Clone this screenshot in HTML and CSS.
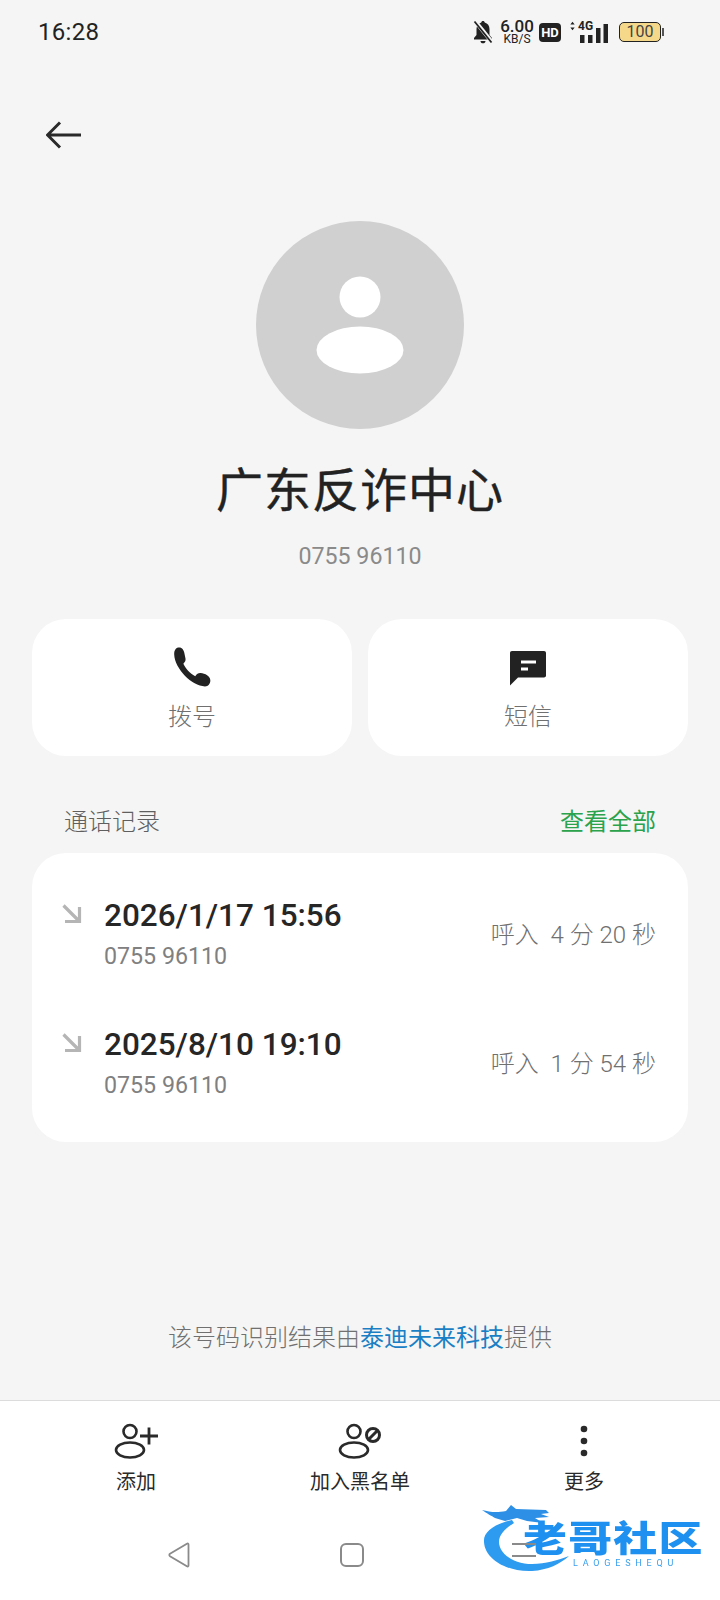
FILE: index.html
```html
<!DOCTYPE html>
<html lang="zh-CN">
  <head>
    <meta charset="UTF-8" />
    <title>广东反诈中心</title>
    <link rel="stylesheet" href="styles.css">
  </head>
  <body>
    <div class="phone">
      <div class="status-bar">
        <span class="time">16:28</span>
        <div class="status-icons">
          <svg class="ic-bell" viewBox="0 0 22 24">
            <path d="M11 1c1 0 1.700.7 1.700 1.600 3 .8 4.800 3.300 4.800 6.400v6l2.500 3v1.500H2V18l2.500-3V9c0-3.100 1.800-5.600 4.800-6.400C9.300 1.700 10 1 11 1zM8.500 21h5c0 1.400-1.100 2.300-2.500 2.300S8.500 22.400 8.500 21z" fill="#222"/>
            <path d="M3 1l17 21" stroke="#f5f5f5" stroke-width="4"/>
            <path d="M2.500 1.500l17 21" stroke="#222" stroke-width="1.800"/>
          </svg>
          <div class="speed"><span class="speed-num">6.00</span><span class="speed-unit">KB/S</span></div>
          <span class="hd">HD</span>
          <div class="signal">
            <svg class="updown" viewBox="0 0 8 14"><path d="M4 1l3 4H1zM4 13L1 9h6z" fill="#222"/></svg>
            <span class="fourg">4G</span>
            <svg class="bars" viewBox="0 0 28 19"><rect x="0" y="11" width="4.500" height="8"/><rect x="8" y="11" width="4.500" height="8"/><rect x="16" y="4" width="4.500" height="15"/><rect x="23.500" y="0" width="4.500" height="19"/></svg>
          </div>
          <div class="battery"><span class="battery-body">100</span><span class="battery-tip"></span></div>
        </div>
      </div>

      <div class="back-row">
        <svg class="back" viewBox="0 0 36 28"><path d="M35 14H2M14 1.500L1.500 14 14 26.500" fill="none" stroke="#2a2a2a" stroke-width="3"/></svg>
      </div>

      <div class="profile">
        <div class="avatar">
          <svg viewBox="0 0 88 98" class="avatar-icon">
            <circle cx="44" cy="21" r="20.500" fill="#fff"/>
            <ellipse cx="44" cy="74" rx="43.500" ry="23.500" fill="#fff"/>
          </svg>
        </div>
        <h1 class="name">广东反诈中心</h1>
        <p class="number">0755 96110</p>
      </div>

      <div class="actions">
        <div class="action">
          <svg class="action-icon" viewBox="2 2 36 38"><path d="M8 2.500C11 2.500 12.500 5 13 8l1 5c.3 2-.7 3-2 4.500 2 4.500 6 9 11 11.500 1.500-2 3-3 5-2.800 4 .3 9 2.800 9 6.800 0 3-2 5.500-5 5.500C20 38.500 4 22 3.500 9 3.400 5 5 2.500 8 2.500z" fill="#222"/></svg>
          <span class="action-label">拨号</span>
        </div>
        <div class="action">
          <svg class="action-icon" viewBox="0 0 40 40"><path d="M4 3.500h32c1.200 0 2 .8 2 2V28c0 1.200-.8 2-2 2H10l-8 8V5.500c0-1.200.8-2 2-2z" fill="#222"/><rect x="13" y="13" width="15" height="3" fill="#fff"/><rect x="13" y="20" width="7" height="3" fill="#fff"/></svg>
          <span class="action-label">短信</span>
        </div>
      </div>

      <div class="section-head">
        <span class="section-title">通话记录</span>
        <span class="section-link">查看全部</span>
      </div>

      <div class="calls">
        <div class="call">
          <svg class="call-arrow" viewBox="0 0 20 20"><path d="M1.500 1.500L16 16M17.500 3v14.500H3" fill="none" stroke="#b5b5b5" stroke-width="3.200"/></svg>
          <div class="call-main">
            <div class="call-date">2026/1/17 15:56</div>
            <div class="call-number">0755 96110</div>
          </div>
          <span class="call-meta">呼入&nbsp; 4 分 20 秒</span>
        </div>
        <div class="call">
          <svg class="call-arrow" viewBox="0 0 20 20"><path d="M1.500 1.500L16 16M17.500 3v14.500H3" fill="none" stroke="#b5b5b5" stroke-width="3.200"/></svg>
          <div class="call-main">
            <div class="call-date">2025/8/10 19:10</div>
            <div class="call-number">0755 96110</div>
          </div>
          <span class="call-meta">呼入&nbsp; 1 分 54 秒</span>
        </div>
      </div>

      <p class="credit">该号码识别结果由<span class="credit-link">泰迪未来科技</span>提供</p>

      <div class="bottom">
        <div class="tabs">
          <div class="tab">
            <svg class="tab-icon" viewBox="0 0 44 38"><circle cx="16" cy="9.500" r="6.500" fill="none" stroke="#2a2a2a" stroke-width="2.600"/><ellipse cx="16" cy="28" rx="14" ry="7.500" fill="none" stroke="#2a2a2a" stroke-width="2.600"/><path d="M35 5.500v17M26 14h18" stroke="#2a2a2a" stroke-width="2.800" fill="none"/></svg>
            <span class="tab-label">添加</span>
          </div>
          <div class="tab">
            <svg class="tab-icon" viewBox="0 0 44 38"><circle cx="16" cy="9.500" r="6.500" fill="none" stroke="#2a2a2a" stroke-width="2.600"/><ellipse cx="16" cy="28" rx="14" ry="7.500" fill="none" stroke="#2a2a2a" stroke-width="2.600"/><circle cx="35" cy="13" r="6.500" fill="none" stroke="#2a2a2a" stroke-width="3"/><path d="M30.500 17.500l9-9" stroke="#2a2a2a" stroke-width="3"/></svg>
            <span class="tab-label">加入黑名单</span>
          </div>
          <div class="tab">
            <svg class="tab-icon" viewBox="0 0 44 38"><circle cx="22" cy="7" r="3.300" fill="#2a2a2a"/><circle cx="22" cy="19" r="3.300" fill="#2a2a2a"/><circle cx="22" cy="31" r="3.300" fill="#2a2a2a"/></svg>
            <span class="tab-label">更多</span>
          </div>
        </div>
        <div class="nav">
          <svg class="nav-back" viewBox="0 0 24 26"><path d="M21.500 2.500v21c0 1-.8 1.300-1.600.8L3 14.200c-.9-.6-.9-1.800 0-2.400L19.900 1.700c.8-.5 1.600-.2 1.600.8z" fill="none" stroke="#8a8a8a" stroke-width="1.800"/></svg>
          <span class="nav-home"></span>
          <div class="nav-menu"><span></span><span></span></div>
        </div>
        <div class="watermark">
          <svg class="wm-dragon" viewBox="0 0 90 70">
            <path d="M30 16C12 20 1 28 2 38c1 18 24 30 48 29 16-1 28-7 37-15-11 4-23 8-37 8-18 0-33-10-33-22 0-8 7-14 15-19z" fill="#2d9bf0"/>
            <path d="M0 6c8 2 14 3 24 1l5-6 5 4 30 1 3 3-8 1 8 3-14 1 8 5-16-2-10-3-12 3-10-3C10 12 4 9 0 6z" fill="#2d8fe6"/>
          </svg>
          <span class="wm-title">老哥社区</span>
          <span class="wm-sub">LAOGESHEQU</span>
        </div>
      </div>
    </div>
  </body>
</html>
```

FILE: styles.css
```css
* {
  box-sizing: border-box;
}
body {
  margin: 0;
  background: #f5f5f5;
  font-family: Roboto, "Noto Sans CJK SC", sans-serif;
}
p,
h1 {
  margin: 0;
}
.phone {
  width: 720px;
  height: 1600px;
  display: flex;
  flex-direction: column;
  overflow: hidden;
}

/* status bar */
.status-bar {
  height: 64px;
  padding: 0 56px 0 38px;
  display: flex;
  align-items: center;
  justify-content: space-between;
  color: #222;
}
.time {
  font-size: 24px;
  letter-spacing: 0.3px;
}
.status-icons {
  display: flex;
  align-items: center;
}
.ic-bell {
  width: 22px;
  height: 24px;
}
.speed {
  margin-left: 6px;
  width: 34px;
  display: flex;
  flex-direction: column;
  align-items: center;
  line-height: 1;
}
.speed-num {
  font-size: 17px;
  font-weight: 500;
  height: 13px;
  line-height: 13px;
}
.speed-unit {
  margin-top: 1px;
  font-size: 12px;
  height: 10px;
  line-height: 10px;
}
.hd {
  margin-left: 5px;
  width: 22px;
  height: 19px;
  border-radius: 4px;
  background: #222;
  color: #fff;
  font-size: 13px;
  font-weight: 700;
  line-height: 19px;
  text-align: center;
}
.signal {
  position: relative;
  margin-left: 8px;
  width: 39px;
  height: 22px;
}
.updown {
  position: absolute;
  left: 0;
  top: 0;
  width: 7px;
  height: 10px;
}
.fourg {
  position: absolute;
  left: 9px;
  top: -2px;
  font-size: 12px;
  font-weight: 700;
  color: #222;
}
.bars {
  position: absolute;
  right: 0;
  bottom: 0;
  width: 28px;
  height: 19px;
  fill: #222;
}
.battery {
  margin-left: 11px;
  display: flex;
  align-items: center;
}
.battery-body {
  width: 42px;
  height: 20px;
  border: 1.500px solid #222;
  border-radius: 5px;
  background: #f5d88a;
  font-size: 16px;
  line-height: 17px;
  text-align: center;
  color: #444;
}
.battery-tip {
  margin-left: 1px;
  width: 2px;
  height: 8px;
  background: #555;
}

/* header */
.back-row {
  padding: 57px 0 0 46px;
  height: 157px;
}
.back {
  width: 36px;
  height: 28px;
  display: block;
}
.profile {
  display: flex;
  flex-direction: column;
  align-items: center;
}
.avatar {
  width: 208px;
  height: 208px;
  border-radius: 50%;
  background: #d0d0d0;
  display: flex;
  align-items: center;
  justify-content: center;
}
.avatar-icon {
  width: 88px;
  height: 98px;
}
.name {
  margin-top: 32px;
  font-size: 47px;
  font-weight: 400;
  line-height: 60px;
  letter-spacing: 1px;
  color: #222;
  -webkit-text-stroke: 0.4px #222;
}
.number {
  margin-top: 20px;
  font-size: 23.200px;
  line-height: 30px;
  color: #8a8a8a;
}

/* call + sms buttons */
.actions {
  margin-top: 48px;
  padding: 0 32px;
  display: grid;
  grid-template-columns: 1fr 1fr;
  gap: 16px;
}
.action {
  height: 137px;
  background: #fff;
  border-radius: 34px;
  display: flex;
  flex-direction: column;
  align-items: center;
  padding-top: 28px;
}
.action-icon {
  width: 40px;
  height: 41px;
}
.action-label {
  margin-top: 13px;
  font-size: 24px;
  line-height: 32px;
  font-weight: 300;
  color: #707070;
}

/* call log */
.section-head {
  margin-top: 45px;
  padding: 0 64px;
  display: flex;
  justify-content: space-between;
  align-items: center;
  height: 36px;
  font-size: 24px;
}
.section-title {
  font-weight: 300;
  color: #5f5f5f;
}
.section-link {
  color: #2ba24c;
}
.calls {
  margin: 16px 32px 0;
  height: 289px;
  padding: 41px 32px 0 30px;
  background: #fff;
  border-radius: 34px;
}
.call {
  height: 129px;
  display: flex;
  align-items: flex-start;
}
.call-arrow {
  margin-top: 10px;
  width: 20px;
  height: 20px;
  flex: none;
}
.call-main {
  margin-left: 22px;
  flex: 1;
}
.call-date {
  font-size: 31.500px;
  line-height: 44px;
  font-weight: 500;
  color: #262626;
}
.call-number {
  margin-top: 1px;
  font-size: 23.200px;
  line-height: 34px;
  color: #808080;
}
.call-meta {
  margin-top: 24px;
  font-size: 24px;
  line-height: 34px;
  font-weight: 300;
  color: #707070;
}

.credit {
  margin-top: 179px;
  text-align: center;
  font-size: 24px;
  line-height: 34px;
  font-weight: 300;
  color: #707070;
}
.credit-link {
  color: #1a7fc4;
  font-weight: 400;
}

/* bottom bar */
.bottom {
  position: relative;
  margin-top: 45px;
  flex: 1;
  background: #fff;
  border-top: 1px solid #dcdcdc;
}
.tabs {
  padding-top: 21px;
  display: grid;
  grid-template-columns: 224px 224px 224px;
  justify-content: center;
}
.tab {
  display: flex;
  flex-direction: column;
  align-items: center;
}
.tab-icon {
  width: 44px;
  height: 38px;
}
.tab-label {
  margin-top: 8px;
  font-size: 20px;
  line-height: 28px;
  color: #2a2a2a;
}
.nav {
  position: relative;
  z-index: 1;
  margin-top: 46px;
  padding-left: 167px;
  display: flex;
  align-items: flex-start;
}
.nav-back {
  width: 24px;
  height: 26px;
}
.nav-home {
  margin: 1px 0 0 149px;
  width: 24px;
  height: 24px;
  border: 2px solid #8a8a8a;
  border-radius: 6px;
}
.nav-menu {
  margin: 1px 0 0 148px;
  width: 24px;
  height: 14px;
  display: flex;
  flex-direction: column;
  justify-content: space-between;
}
.nav-menu span {
  height: 2px;
  background: #8a8a8a;
}

/* watermark sits on top of the screenshot */
.watermark {
  position: absolute;
  left: 482px;
  top: 103px;
  width: 224px;
  height: 70px;
  filter: blur(0.5px);
}
.wm-dragon {
  position: absolute;
  left: 0;
  top: 0;
  width: 90px;
  height: 70px;
}
.wm-title {
  position: absolute;
  left: 41px;
  top: 20px;
  font-size: 36px;
  line-height: 32px;
  font-weight: 900;
  letter-spacing: 1px;
  color: #1e90f0;
  white-space: nowrap;
  transform: scaleX(1.22);
  transform-origin: left;
}
.wm-sub {
  position: absolute;
  left: 91px;
  top: 53px;
  font-size: 9px;
  line-height: 12px;
  letter-spacing: 4.800px;
  color: #3aa0ee;
  white-space: nowrap;
}
```
